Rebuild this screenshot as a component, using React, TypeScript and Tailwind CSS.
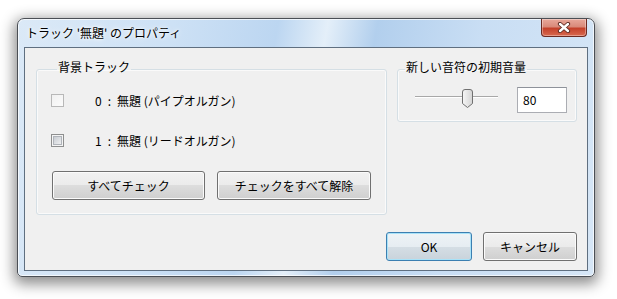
import React from "react";

const font = "font-['Noto_Sans_CJK_JP','Noto_Sans',sans-serif]";

function Button({ label, width, isDefault }: { label: string; width: string; isDefault?: boolean }) {
  return (
    <button
      className={
        "h-[29px] rounded-[3px] border text-[12px] text-black " +
        width +
        (isDefault
          ? " border-[#3c7fb1] bg-[linear-gradient(#eef3f6_0%,#e6edf2_50%,#d5dee5_50%,#c9d3db_100%)] shadow-[inset_0_0_0_1px_#a8e2f8]"
          : " border-[#707070] bg-[linear-gradient(#f2f2f2_0%,#ebebeb_50%,#dddddd_50%,#cfcfcf_100%)] shadow-[inset_0_0_0_1px_#fbfbfb]")
      }
    >
      {label}
    </button>
  );
}

function CheckRow({ label, dim }: { label: string; dim?: boolean }) {
  return (
    <div className="flex h-[13px] items-center">
      {dim ? (
        <div className="h-[13px] w-[13px] border border-[#b8b8b8] bg-[linear-gradient(135deg,#f0f0f0,#fbfbfb)]" />
      ) : (
        <div className="flex h-[13px] w-[13px] items-center justify-center border border-[#8e8f8f] bg-[#f4f4f4]">
          <div className="h-[9px] w-[9px] border border-[#b0b4ba] bg-[linear-gradient(135deg,#c8ccd2,#eeeff1)]" />
        </div>
      )}
      <span className="ml-[31px] text-[12px] leading-[16px] text-black">{label}</span>
    </div>
  );
}

function CloseButton() {
  return (
    <div className="flex h-[18px] w-[46px] items-center justify-center rounded-b-[4px] border border-t-0 border-[#6b2a22] bg-[linear-gradient(#e8a89b_0%,#d98a7a_45%,#c4412b_55%,#d8694f_100%)] shadow-[inset_0_0_0_1px_rgba(255,255,255,0.35)]">
      <svg width="14" height="11" viewBox="0 0 14 11">
        <path d="M3 2 L11 9 M11 2 L3 9" stroke="#5a2a22" strokeWidth="4.2" strokeLinecap="round" />
        <path d="M3 2 L11 9 M11 2 L3 9" stroke="#ffffff" strokeWidth="2.4" strokeLinecap="round" />
      </svg>
    </div>
  );
}

function Slider() {
  return (
    <div className="relative h-[26px] w-[100px]">
      <div className="absolute left-[17px] top-[9px] h-[2px] w-[83px] border-t border-[#a8a8a8] bg-white" />
      <svg className="absolute left-[64px] top-[2px]" width="11" height="19" viewBox="0 0 11 19">
        <defs>
          <linearGradient id="th" x1="0" y1="0" x2="1" y2="0">
            <stop offset="0" stopColor="#f7f7f7" />
            <stop offset="1" stopColor="#d4d4d4" />
          </linearGradient>
        </defs>
        <path d="M0.5 3 Q0.5 0.5 3 0.5 H8 Q10.5 0.5 10.5 3 V14.5 L5.5 18.5 L0.5 14.5 Z" fill="url(#th)" stroke="#707070" />
      </svg>
    </div>
  );
}

export default function App() {
  return (
    <div className={"h-[299px] w-[617px] bg-white pl-[17px] pt-[18px] " + font}>
      <div className="flex h-[259px] w-[578px] flex-col rounded-t-[7px] rounded-b-[5px] border border-[#4b4f55] bg-[linear-gradient(100deg,#dbe9f7_0%,#cde1f5_25%,#bcd6f1_42%,#e4eff9_50%,#b2cfed_58%,#c9def4_75%,#d6e6f6_100%)] shadow-[inset_0_0_0_1px_rgba(255,255,255,0.7),0_4px_14px_3px_rgba(0,0,0,0.45)]">
        {/* title bar */}
        <div className="flex h-[28px] items-start justify-between pl-[8px] pr-[7px]">
          <span className="mt-[5px] text-[12px] leading-[18px] text-black [text-shadow:0_0_6px_#ffffff,0_0_3px_#ffffff]">
            トラック '無題' のプロパティ
          </span>
          <CloseButton />
        </div>

        {/* client area */}
        <div className="mx-[6px] flex h-[224px] flex-col border border-[#5f6f80] bg-[#f0f0f0] pl-[11px] pr-[10px] pt-[11px] text-black">
          <div className="flex items-start gap-[10px]">
            <fieldset className="w-[351px] rounded-[3px] border border-[#d5dfe5] pb-[14px] pl-[14px] shadow-[inset_0_0_0_1px_#fafafa]">
              <legend className="ml-[6px] px-[1px] pb-[4px] text-[12px] leading-[16px]">背景トラック</legend>
              <div className="flex flex-col gap-[27px] pt-[15px]">
                <CheckRow label={"0\u2002:\u2002無題 (パイプオルガン)"} dim />
                <CheckRow label={"1\u2002:\u2002無題 (リードオルガン)"} />
              </div>
              <div className="ml-[1px] mt-[24px] flex gap-[12px]">
                <Button label="すべてチェック" width="w-[153px]" />
                <Button label="チェックをすべて解除" width="w-[154px]" />
              </div>
            </fieldset>

            <fieldset className="w-[180px] rounded-[3px] border border-[#d5dfe5] pb-[8px] pr-[9px] shadow-[inset_0_0_0_1px_#fafafa]">
              <legend className="ml-[7px] px-[1px] pb-[4px] text-[12px] leading-[16px]">新しい音符の初期音量</legend>
              <div className="flex items-center justify-between pt-[8px]">
                <Slider />
                <div className="flex h-[26px] w-[50px] items-center border border-[#abadb3] border-t-[#8e929a] bg-white pl-[5px] text-[12px]">
                  80
                </div>
              </div>
            </fieldset>
          </div>

          <div className="mt-[17px] flex justify-end gap-[11px]">
            <Button label="OK" width="w-[86px]" isDefault />
            <Button label="キャンセル" width="w-[94px]" />
          </div>
        </div>
      </div>
    </div>
  );
}
